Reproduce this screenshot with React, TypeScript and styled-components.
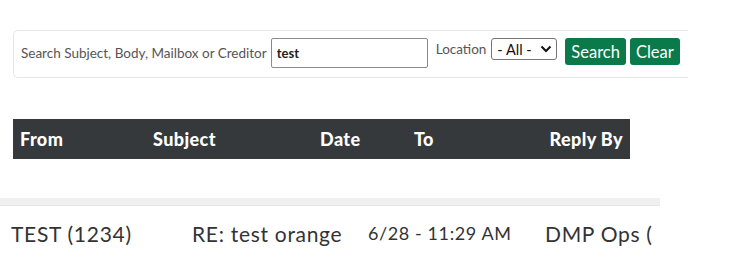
import React from "react";
import styled, { createGlobalStyle } from "styled-components";

const Global = createGlobalStyle`
  html, body { margin: 0; padding: 0; background: #fff; }
  body { font-family: "Lato", "Open Sans", sans-serif; color: #333; }
`;

const Page = styled.div`
  width: 739px;
  height: 272px;
  overflow: hidden;
  padding-top: 30px;
  box-sizing: border-box;
`;

const Panel = styled.form`
  margin-left: 13px;
  width: 675px;
  height: 48px;
  box-sizing: border-box;
  border: 1px solid #e6e6e6;
  border-right: none;
  border-radius: 5px 0 0 5px;
  display: flex;
  align-items: flex-start;
  padding: 7px 0 0 7px;
  gap: 4px;
`;

const Label = styled.label<{ $top?: number }>`
  font-size: 13.5px;
  color: #555;
  margin-top: ${(p) => p.$top ?? 0}px;
  white-space: nowrap;
`;

const TextInput = styled.input`
  width: 157px;
  height: 30px;
  box-sizing: border-box;
  border: 1px solid #8a8a8a;
  border-radius: 2px;
  padding: 0 5px;
  font-family: "Lato", sans-serif;
  font-weight: 700;
  font-size: 13px;
  color: #222;
  margin-right: 4px;
`;

const Select = styled.div`
  width: 66px;
  height: 22px;
  box-sizing: border-box;
  border: 1px solid #767676;
  border-radius: 3px;
  display: flex;
  align-items: center;
  justify-content: space-between;
  padding: 0 4px 0 5px;
  font-size: 14.5px;
  color: #111;
  margin-left: 1px;
  margin-right: 4px;
`;

const Button = styled.button`
  height: 27px;
  box-sizing: border-box;
  border: none;
  border-radius: 3px;
  background: #0b7a4b;
  color: #fff;
  font-family: "Lato", sans-serif;
  font-size: 16.5px;
  padding: 0 6px;
`;

const HeaderBar = styled.div`
  margin: 41px 0 0 13px;
  width: 617px;
  height: 40px;
  background: #35393c;
  display: grid;
  grid-template-columns: 133px 167px 94px 135px 1fr;
  align-items: center;
  color: #fff;
  font-weight: 900;
  font-size: 18px;
  letter-spacing: 0.4px;
`;

const HeadCell = styled.div<{ $right?: boolean }>`
  padding: 0 7px;
  text-align: ${(p) => (p.$right ? "right" : "left")};
  white-space: nowrap;
`;

const Band = styled.div`
  margin-top: 39px;
  width: 660px;
  height: 8px;
  background: #f0f0f0;
  border-bottom: 1px solid #e4e6ea;
  box-sizing: border-box;
`;

const Row = styled.div`
  width: 660px;
  display: grid;
  grid-template-columns: 181px 176px 177px 1fr;
  padding: 15px 0 0 11px;
  box-sizing: border-box;
  color: #333;
  white-space: nowrap;
`;

const Cell = styled.div<{ $small?: boolean }>`
  font-size: ${(p) => (p.$small ? "18px" : "21px")};
  letter-spacing: ${(p) => (p.$small ? "0.6px" : "0.7px")};
  padding-top: ${(p) => (p.$small ? "1px" : "0")};
`;

const Chevron = () => (
  <svg width="12" height="8" viewBox="0 0 12 8">
    <path d="M1.5 1.5 L6 6 L10.5 1.5" fill="none" stroke="#111" strokeWidth="2" />
  </svg>
);

export default function App() {
  return (
    <>
      <Global />
      <Page>
        <Panel onSubmit={(e) => e.preventDefault()}>
          <Label $top={7}>Search Subject, Body, Mailbox or Creditor</Label>
          <TextInput defaultValue="test" />
          <Label $top={3}>Location</Label>
          <Select>
            <span>- All -</span>
            <Chevron />
          </Select>
          <Button type="button">Search</Button>
          <Button type="button">Clear</Button>
        </Panel>
        <HeaderBar>
          <HeadCell>From</HeadCell>
          <HeadCell>Subject</HeadCell>
          <HeadCell>Date</HeadCell>
          <HeadCell>To</HeadCell>
          <HeadCell $right>Reply By</HeadCell>
        </HeaderBar>
        <Band />
        <Row>
          <Cell>TEST (1234)</Cell>
          <Cell>RE: test orange</Cell>
          <Cell $small>6/28 - 11:29 AM</Cell>
          <Cell>DMP Ops (</Cell>
        </Row>
      </Page>
    </>
  );
}
